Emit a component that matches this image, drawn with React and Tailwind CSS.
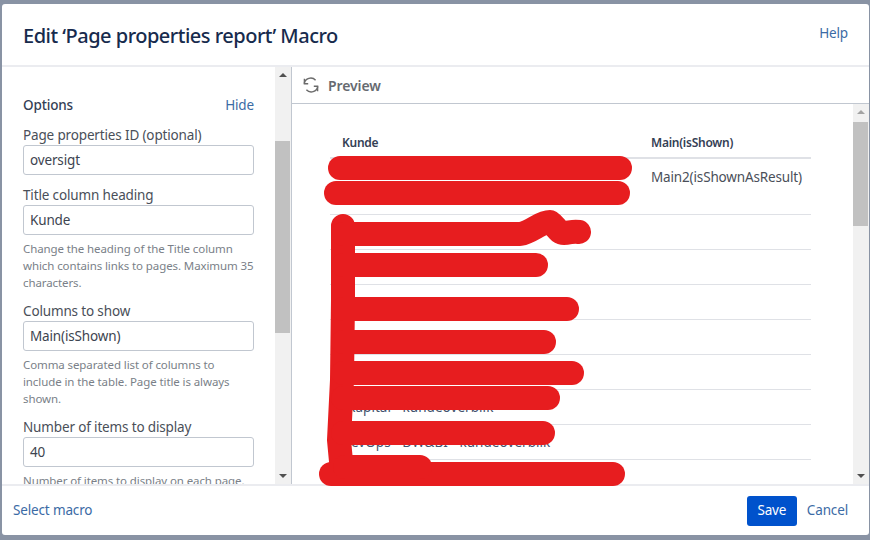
import React from "react";

function Scrollbar({ thumbTop, thumbH, upClass, downClass }) {
  return (
    <div className="relative w-[16px] shrink-0 bg-[#f1f1f1] h-full">
      <div className={`absolute top-[6px] left-[4px] w-0 h-0 border-l-[4px] border-r-[4px] border-b-[4px] border-l-transparent border-r-transparent ${upClass}`} />
      <div className="absolute left-0 w-[15px] bg-[#c1c1c1]" style={{ top: thumbTop, height: thumbH }} />
      <div className={`absolute bottom-[6px] left-[4px] w-0 h-0 border-l-[4px] border-r-[4px] border-t-[4px] border-l-transparent border-r-transparent ${downClass}`} />
    </div>
  );
}

function Field({ label, value, help }) {
  return (
    <div>
      <div className="mt-[10px] h-[20px] leading-[20px] text-[13.5px] tracking-[-0.15px] text-[#4a4f59] whitespace-nowrap">{label}</div>
      <div className="h-[30px] w-[231px] border border-[#c1c7d0] rounded-[3px] px-[6px] leading-[28px] text-[13.5px] tracking-[-0.15px] text-[#3d4450]">{value}</div>
      {help && (
        <div className="mt-[5px] w-[231px] text-[11.5px] tracking-[-0.1px] leading-[17px] text-[#7a7f88]">{help}</div>
      )}
    </div>
  );
}

function Row({ h, children }) {
  return (
    <div className="flex border-b border-[#dfe1e6] pl-[11px] text-[13.5px] tracking-[0.05px] text-[#42526e]" style={{ height: h }}>
      {children}
    </div>
  );
}

export default function App() {
  return (
    <div className="w-[870px] h-[540px] bg-[#8993a4] pt-[4px] pl-[2px] pr-[1px] pb-[5px] overflow-hidden" style={{ fontFamily: '"Noto Sans", "Open Sans", sans-serif' }}>
      <div className="w-full h-full bg-white rounded-[3px] flex flex-col overflow-hidden">
        <header className="h-[63px] shrink-0 border-b-2 border-[#ebecf0] flex items-start justify-between pl-[21px] pr-[21px]">
          <h1 className="mt-[18px] text-[20px] leading-[28px] font-medium text-[#172b4d] tracking-[-0.5px]">Edit ‘Page properties report’ Macro</h1>
          <a className="mt-[19px] text-[13.5px] tracking-[-0.15px] leading-[20px] text-[#3b6ba5]">Help</a>
        </header>

        <main className="flex h-[417px] shrink-0">
          <div className="w-[273px] shrink-0 overflow-hidden pl-[21px] pt-[28px]">
            <div className="w-[231px] h-[20px] flex justify-between items-center text-[13.5px] tracking-[-0.15px] leading-[20px]">
              <span className="font-medium text-[#344054]">Options</span>
              <a className="text-[#3b6ba5]">Hide</a>
            </div>
            <Field label="Page properties ID (optional)" value="oversigt" />
            <Field label="Title column heading" value="Kunde" help="Change the heading of the Title column which contains links to pages. Maximum 35 characters." />
            <Field label="Columns to show" value="Main(isShown)" help="Comma separated list of columns to include in the table. Page title is always shown." />
            <Field label="Number of items to display" value="40" help="Number of items to display on each page." />
          </div>
          <Scrollbar thumbTop={74} thumbH={192} upClass="border-b-[#505050]" downClass="border-t-[#505050]" />

          <section className="flex-1 min-w-0 border-l border-[#c1c7d0] flex flex-col">
            <div className="h-[37px] shrink-0 border-b border-[#c1c7d0] flex items-center pl-[11px] gap-[9px]">
              <svg width="16" height="16" viewBox="0 0 16 16" fill="none" stroke="#6b6b6b" strokeWidth="1.4">
                <path d="M1.2 6.6A6.6 6.6 0 0 1 12.6 3.2" />
                <path d="M14.8 9.4A6.6 6.6 0 0 1 3.4 12.8" />
                <path d="M1.4 1.8V6.8H5.2" />
                <path d="M14.6 14.2V9.2H10.8" />
              </svg>
              <span className="text-[14px] tracking-[-0.1px] font-semibold text-[#666a70]">Preview</span>
            </div>
            <div className="relative flex-1 min-h-0 flex overflow-hidden">
              <div className="flex-1 min-w-0 pl-[38px] pt-[27px]">
                <div className="w-[481px]">
                  <div className="flex h-[28px] border-b-2 border-[#dfe1e6] pl-[12px] text-[12px] tracking-[-0.25px] font-semibold leading-[24px] text-[#344054]">
                    <div className="w-[309px]">Kunde</div>
                    <div>Main(isShown)</div>
                  </div>
                  <Row h={56}>
                    <div className="w-[310px]" />
                    <div className="pt-[6px] leading-[24px] tracking-[-0.15px] text-[#4a4f59] whitespace-nowrap">Main2(isShownAsResult)</div>
                  </Row>
                  <Row h={35} /><Row h={35} /><Row h={35} /><Row h={35} /><Row h={35} />
                  <Row h={35}><span className="pl-[6px] pt-[7px]">Kapital - kundeoverblik</span></Row>
                  <Row h={35}><span className="pt-[7px]">DevOps - DW&amp;BI - kundeoverblik</span></Row>
                  <Row h={35} />
                </div>
              </div>
              <Scrollbar thumbTop={18} thumbH={104} upClass="border-b-[#a3a3a3]" downClass="border-t-[#505050]" />
            </div>
          </section>
        </main>

        <footer className="flex-1 border-t-2 border-[#ebecf0] flex items-center justify-between pl-[11px] pr-[21px] text-[13.5px] tracking-[-0.15px]">
          <a className="text-[#3b6ba5]">Select macro</a>
          <div className="flex items-center gap-[10px]">
            <button className="w-[50px] h-[30px] rounded-[3px] bg-[#0052cc] text-white">Save</button>
            <a className="text-[#3b6ba5]">Cancel</a>
          </div>
        </footer>
      </div>

      <svg className="absolute left-0 top-0 pointer-events-none" width="870" height="540" viewBox="0 0 870 540" fill="none" stroke="#e71d1f" strokeWidth="24" strokeLinecap="round" strokeLinejoin="round">
        <path d="M340 168H620" />
        <path d="M336 193H618" />
        <path d="M343 226V300L342 380L339 440L342 472" />
        <path d="M343 234H520C532 232 540 222 550 222C556 226 558 233 564 233C570 233 572 231 579 232" />
        <path d="M343 265H536" />
        <path d="M343 309H567" />
        <path d="M343 342H544" />
        <path d="M343 373H572" />
        <path d="M343 398H548" />
        <path d="M343 433H543" />
        <path d="M331 474H613" />
        <path d="M345 467H420" />
      </svg>
    </div>
  );
}
